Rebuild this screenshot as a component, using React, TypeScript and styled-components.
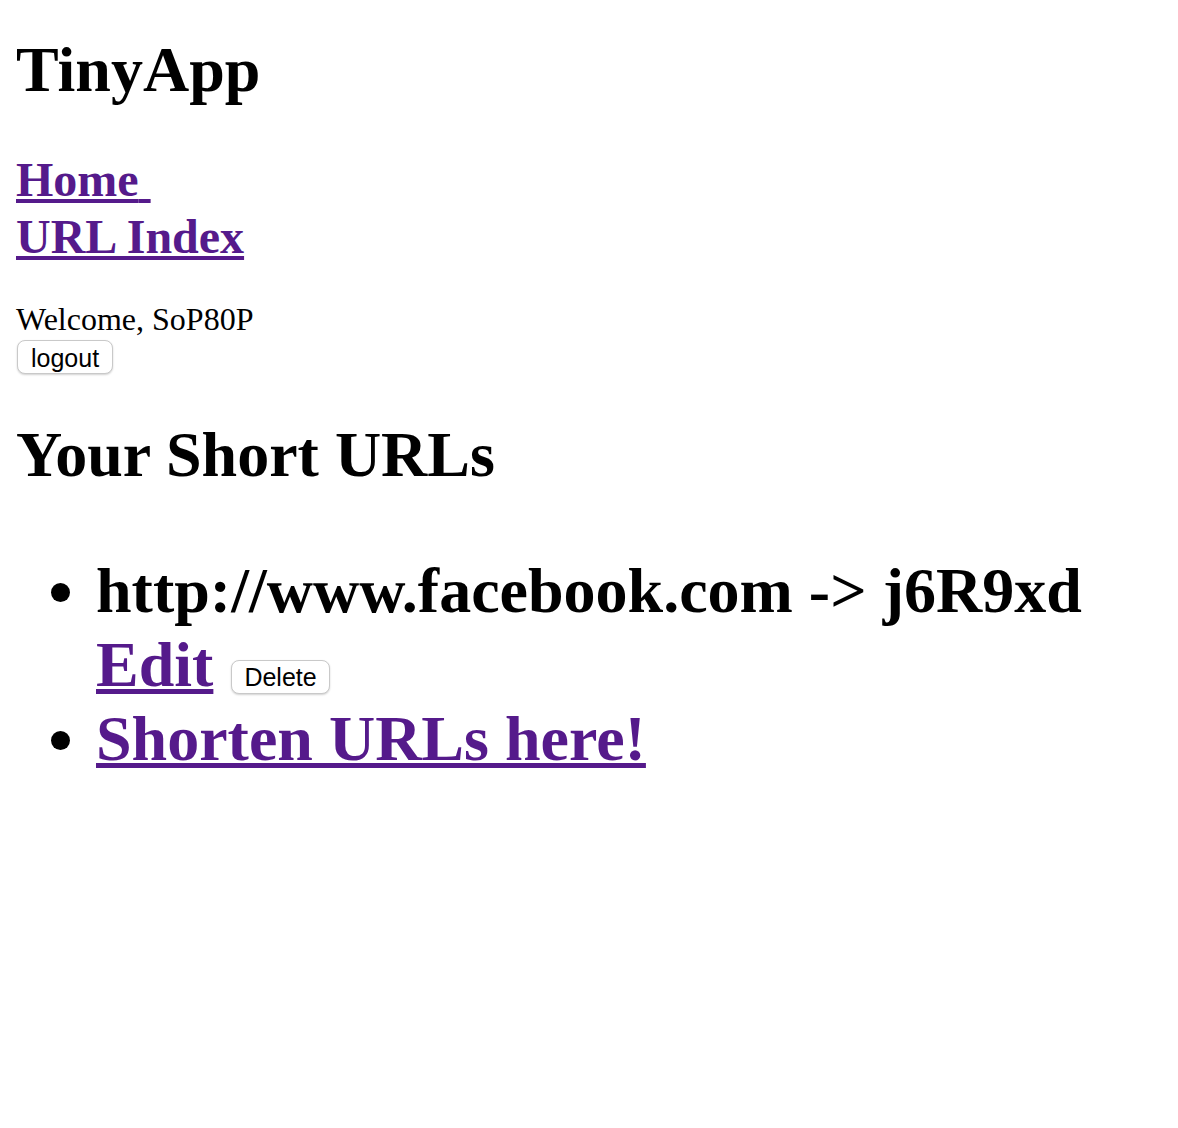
import React from 'react';
import styled, { createGlobalStyle } from 'styled-components';

const GlobalStyle = createGlobalStyle`
  html, body {
    margin: 0;
    padding: 0;
    background: #fff;
  }
  body {
    font-family: "Liberation Serif", "Times New Roman", serif;
    color: #000;
  }
`;

const Page = styled.div`
  display: flow-root;
  padding: 0 16px;
`;

const Title = styled.h1<{ $top: number }>`
  margin: ${(p) => p.$top}px 0 0;
  font-size: 64px;
  font-weight: bold;
  line-height: 74px;
`;

const Nav = styled.h2`
  margin: 44px 0 0;
  font-size: 48px;
  font-weight: bold;
  line-height: 57px;
`;

const Link = styled.a<{ $thick: number }>`
  color: #551a8b;
  text-decoration: underline;
  text-decoration-thickness: ${(p) => p.$thick}px;
  text-underline-offset: 3px;
  cursor: pointer;
`;

const Welcome = styled.div`
  margin-top: 36px;
  font-size: 32px;
  line-height: 37px;
`;

const LogoutForm = styled.form`
  margin: 2px 0 0 1px;
`;

const Button = styled.button`
  display: inline-block;
  box-sizing: border-box;
  height: 34px;
  margin: 0;
  padding: 2px 13px 0;
  font-family: "Liberation Sans", Arial, sans-serif;
  font-size: 25px;
  font-weight: normal;
  line-height: 29px;
  color: #000;
  background: #fff;
  border: 1px solid #c9c9c9;
  border-radius: 8px;
  box-shadow: 0 1px 2px rgba(0, 0, 0, 0.18);
  vertical-align: baseline;
`;

const DeleteButton = styled(Button)`
  margin-left: 2px;
  padding: 2px 12px 0;
`;

const UrlList = styled.ul`
  margin: 62px 0 0;
  padding-left: 80px;
  font-size: 64px;
  font-weight: bold;
  line-height: 74px;
`;

const urls = [{ long: 'http://www.facebook.com', short: 'j6R9xd' }];

export default function App() {
  return (
    <>
      <GlobalStyle />
      <Page>
        <Title $top={33}>TinyApp</Title>
        <Nav>
          <Link $thick={4}>Home{'\u00a0'}</Link>
          <br />
          <Link $thick={4}>URL Index</Link>
        </Nav>
        <Welcome>Welcome, SoP80P</Welcome>
        <LogoutForm onSubmit={(e) => e.preventDefault()}>
          <Button type="submit">logout</Button>
        </LogoutForm>
        <Title $top={44}>Your Short URLs</Title>
        <UrlList>
          {urls.map((url) => (
            <li key={url.short}>
              {url.long} -&gt; {url.short}
              <br />
              <Link $thick={5}>Edit</Link> <DeleteButton type="button">Delete</DeleteButton>
            </li>
          ))}
          <li>
            <Link $thick={5}>Shorten URLs here!</Link>
          </li>
        </UrlList>
      </Page>
    </>
  );
}
